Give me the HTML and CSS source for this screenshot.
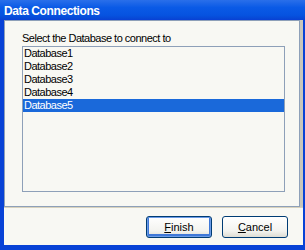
FILE: index.html
```html
<!DOCTYPE html>
<html>
<head>
    <title>Data Connections</title>
    <meta charset="UTF-8">
    <link rel="stylesheet" href="styles.css">
</head>
<body>

<div class="window">
    <div class="titlebar">Data Connections</div>

    <div class="client">
        <div class="panel">
            <div class="prompt">Select the Database to connect to</div>
            <ul class="listbox">
                <li>Database1</li>
                <li>Database2</li>
                <li>Database3</li>
                <li>Database4</li>
                <li class="selected">Database5</li>
            </ul>
        </div>

        <div class="buttons">
            <button class="btn default"><u>F</u>inish</button>
            <button class="btn"><u>C</u>ancel</button>
        </div>
    </div>
</div>

</body>
</html>
```

FILE: styles.css
```css
body {
    margin: 0;
    font-family: "Liberation Sans", Arial, sans-serif;
    font-size: 11px;
    letter-spacing: -0.5px;
}

.window {
    width: 305px;
    height: 250px;
    box-sizing: border-box;
    display: flex;
    flex-direction: column;
    background: #0842d6;
}

.titlebar {
    height: 16px;
    padding: 3px 0 0 4px;
    line-height: 16px;
    color: #fff;
    font-weight: bold;
    font-size: 12px;
    letter-spacing: -0.4px;
    background: linear-gradient(#2a6fea, #0a5ae6 40%, #0653e0 80%, #0846d4);
}

.client {
    flex: 1;
    margin: 1px 2px 5px 4px;
    display: flex;
    flex-direction: column;
    background: #c8c6bc;
}

.panel {
    flex: 1;
    margin-right: 3px;
    padding: 10px 14px 0 17px;
    border: 1px solid #8ea0b8;
    background: #f8f8f3;
}

.prompt {
    height: 15px;
    line-height: 15px;
    color: #000;
}

.listbox {
    margin: 0;
    padding: 0;
    list-style: none;
    height: 144px;
    border: 1px solid #8ea0b8;
    background: #f8f8f3;
}

.listbox li {
    height: 13px;
    line-height: 13px;
    padding-left: 1px;
    color: #000;
}

.listbox li.selected {
    background: #1a69da;
    color: #fff;
}

.buttons {
    height: 37px;
    display: flex;
    justify-content: flex-end;
    align-items: center;
    gap: 10px;
    padding-right: 15px;
    border-top: 1px solid #d8d2bd;
    background: #f8f8f3;
}

.btn {
    width: 66px;
    height: 22px;
    padding: 0;
    font-family: "Liberation Sans", Arial, sans-serif;
    font-size: 11px;
    letter-spacing: 0;
    color: #000;
    border: 1px solid #003c74;
    border-radius: 3px;
    background: linear-gradient(#fff, #f3f3ef 70%, #dedcd3);
}

.btn.default {
    box-shadow: inset 0 0 0 1px #6c9ce6, inset 0 -1px 0 2px #3f78d8;
}
```
